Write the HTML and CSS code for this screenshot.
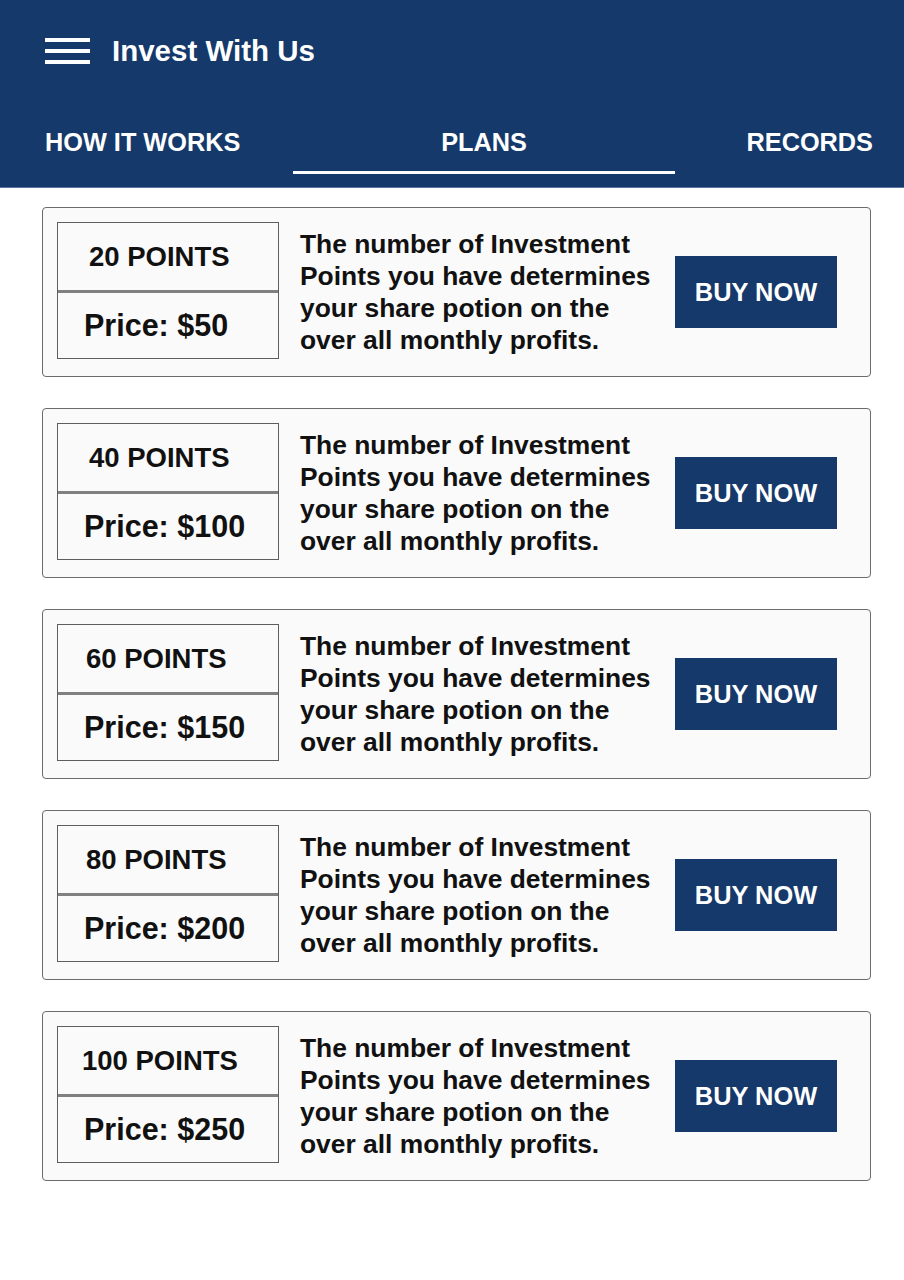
FILE: index.html
```html
<!DOCTYPE html>
<html>
<head>
<meta charset="utf-8">
<link rel="stylesheet" href="styles.css">
</head>
<body>
<header class="appbar">
  <div class="toolbar">
    <svg class="menu" width="45" height="27" viewBox="0 0 45 27"><rect x="0" y="0" width="45" height="4" fill="#fff"/><rect x="0" y="11" width="45" height="4" fill="#fff"/><rect x="0" y="22" width="45" height="4" fill="#fff"/></svg>
    <span class="title">Invest With Us</span>
  </div>
  <nav class="tabs">
    <div class="tab tab-how">HOW IT WORKS</div>
    <div class="tab tab-plans active">PLANS</div>
    <div class="tab tab-records">RECORDS</div>
  </nav>
</header>
<main class="list">
  <section class="card">
    <div class="plan"><div class="points">20 POINTS</div><div class="price">Price: $50</div></div>
    <p class="desc">The number of Investment Points you have determines your share potion on the over all monthly profits.</p>
    <button class="buy">BUY NOW</button>
  </section>
  <section class="card">
    <div class="plan"><div class="points">40 POINTS</div><div class="price">Price: $100</div></div>
    <p class="desc">The number of Investment Points you have determines your share potion on the over all monthly profits.</p>
    <button class="buy">BUY NOW</button>
  </section>
  <section class="card">
    <div class="plan"><div class="points p-narrow">60 POINTS</div><div class="price">Price: $150</div></div>
    <p class="desc">The number of Investment Points you have determines your share potion on the over all monthly profits.</p>
    <button class="buy">BUY NOW</button>
  </section>
  <section class="card">
    <div class="plan"><div class="points p-narrow">80 POINTS</div><div class="price">Price: $200</div></div>
    <p class="desc">The number of Investment Points you have determines your share potion on the over all monthly profits.</p>
    <button class="buy">BUY NOW</button>
  </section>
  <section class="card">
    <div class="plan"><div class="points p-wide">100 POINTS</div><div class="price">Price: $250</div></div>
    <p class="desc">The number of Investment Points you have determines your share potion on the over all monthly profits.</p>
    <button class="buy">BUY NOW</button>
  </section>
</main>
</body>
</html>
```
FILE: styles.css
```css
* { box-sizing: border-box; }
html, body { margin: 0; padding: 0; background: #fff; }
body { font-family: "Liberation Sans", Arial, sans-serif; font-weight: bold; color: #111; }

.appbar { background: #15396a; height: 188px; color: #fff; border-bottom: 1px solid #5a76a0; }
.toolbar { display: flex; align-items: center; height: 102px; padding-left: 45px; }
.menu { display: block; margin-right: 22px; margin-top: 1px; }
.title { font-size: 29.5px; }

.tabs { display: flex; height: 85px; font-size: 25.3px; }
.tab { position: relative; display: flex; align-items: center; height: 72px; padding-top: 8px; }
.tab-how { width: 293px; padding-left: 45px; }
.tab-plans { width: 382px; justify-content: center; }
.tab-records { flex: 1; justify-content: flex-end; padding-right: 31px; }
.tab.active::after { content: ""; position: absolute; left: 0; right: 0; bottom: 0; height: 3px; background: #fff; }

.list { display: flex; flex-direction: column; gap: 31px; padding: 19px 33px 0 42px; }
.card { display: flex; align-items: center; height: 170px; border: 1px solid #6b6b6b; border-radius: 4px; background: #fafafa; padding: 0 0 0 14px; }
.plan { width: 222px; height: 137px; border: 1px solid #5e5e5e; display: flex; flex-direction: column; margin-top: -3px; }
.points { height: 70px; flex: none; border-bottom: 3px solid #808080; font-size: 27.5px; display: flex; align-items: center; padding: 0 0 0 31px; }
.points.p-narrow { padding-left: 28px; }
.points.p-wide { padding-left: 24px; }
.price { flex: 1; font-size: 30.5px; display: flex; align-items: center; padding: 0 0 0 26px; }
.desc { margin: 0 0 0 21px; width: 354px; font-size: 26.4px; line-height: 32px; color: #111; }
.buy { margin-left: 21px; width: 162px; height: 72px; border: none; background: #15396a; color: #fff; font-family: "Liberation Sans", Arial, sans-serif; font-weight: bold; font-size: 25.4px; padding: 0; }
```
